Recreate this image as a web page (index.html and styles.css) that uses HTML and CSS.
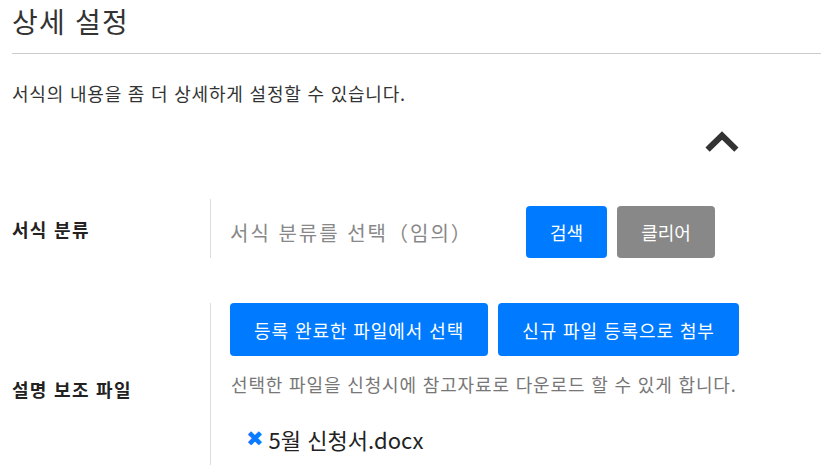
FILE: index.html
```html
<!DOCTYPE html>
<html lang="ko">
<head>
<meta charset="utf-8">
<link rel="stylesheet" href="styles.css">
</head>
<body>
<div class="page">
  <h3 class="title">상세 설정</h3>
  <p class="desc">서식의 내용을 좀 더 상세하게 설정할 수 있습니다.</p>
  <div class="toggle-row">
    <svg class="chevron" width="36" height="24" viewBox="0 0 36 24"><polyline points="5.75,17.5 18,5.5 30.25,17.5" fill="none" stroke="#333" stroke-width="6" stroke-linecap="square" stroke-linejoin="miter"/></svg>
  </div>
  <div class="row row-cat">
    <div class="label">서식 분류</div>
    <div class="field">
      <span class="placeholder">서식 분류를 선택（임의）</span>
      <button class="btn btn-primary btn-search">검색</button>
      <button class="btn btn-gray">클리어</button>
    </div>
  </div>
  <div class="row row-file">
    <div class="label">설명 보조 파일</div>
    <div class="field field-col">
      <div class="btns">
        <button class="btn btn-primary btn-wide">등록 완료한 파일에서 선택</button>
        <button class="btn btn-primary btn-wide">신규 파일 등록으로 첨부</button>
      </div>
      <p class="help">선택한 파일을 신청시에 참고자료로 다운로드 할 수 있게 합니다.</p>
      <div class="file"><span class="remove">✖</span><span class="fname">5월 신청서.docx</span></div>
    </div>
  </div>
</div>
</body>
</html>
```

FILE: styles.css
```css
html, body {
  margin: 0;
  padding: 0;
  background: #fff;
  overflow: hidden;
}
body {
  font-family: "Noto Sans CJK KR", "Noto Sans", sans-serif;
  color: #333;
}
.page {
  padding: 0 0 0 12px;
}
.title {
  margin: 0;
  padding: 2px 0 12px 0;
  font-size: 28px;
  font-weight: 400;
  line-height: 1.4;
  letter-spacing: 1.2px;
  color: #333;
  border-bottom: 1px solid #ccc;
}
.desc {
  margin: 26px 0 0 0;
  font-size: 18px;
  line-height: 1.5;
  letter-spacing: 0.8px;
  color: #333;
}
.toggle-row {
  display: flex;
  justify-content: flex-end;
  padding-right: 81px;
  margin-top: 23px;
  height: 24px;
}
.chevron {
  display: block;
}
.row {
  display: flex;
}
.label {
  width: 198px;
  flex: none;
  display: flex;
  align-items: center;
  font-size: 18px;
  font-weight: 700;
  letter-spacing: 1.3px;
  color: #222;
}
.field {
  border-left: 1px solid #ddd;
  padding-left: 19px;
}
.row-cat {
  margin-top: 45px;
  height: 59px;
}
.row-cat .field {
  display: flex;
  align-items: center;
  padding-top: 7px;
  box-sizing: border-box;
}
.placeholder {
  font-size: 20px;
  color: #888;
  letter-spacing: 2px;
  width: 296px;
}
.btn {
  font-family: inherit;
  font-size: 18px;
  line-height: 26px;
  border: 0;
  border-radius: 4px;
  color: #fff;
  height: 52px;
  padding: 0 24px;
  cursor: pointer;
}
.btn-primary {
  background: #007bff;
}
.btn-gray {
  background: #888;
  margin-left: 10px;
}
.row-file {
  margin-top: 45px;
  height: 172px;
}
.field-col {
  display: flex;
  flex-direction: column;
}
.btns {
  display: flex;
  gap: 10px;
}
.btn-wide {
  height: 53px;
  padding: 0 24px;
  letter-spacing: 0.92px;
}
.help {
  margin: 15px 0 0 1px;
  font-size: 18px;
  line-height: 27px;
  letter-spacing: 0.85px;
  color: #777;
}
.file {
  margin: 25px 0 0 16px;
  display: flex;
  align-items: center;
}
.remove {
  color: #0a7bff;
  font-size: 21px;
  line-height: 1;
  font-family: "DejaVu Sans", sans-serif;
  margin-right: 5px;
}
.fname {
  font-size: 22px;
  color: #222;
}
```
